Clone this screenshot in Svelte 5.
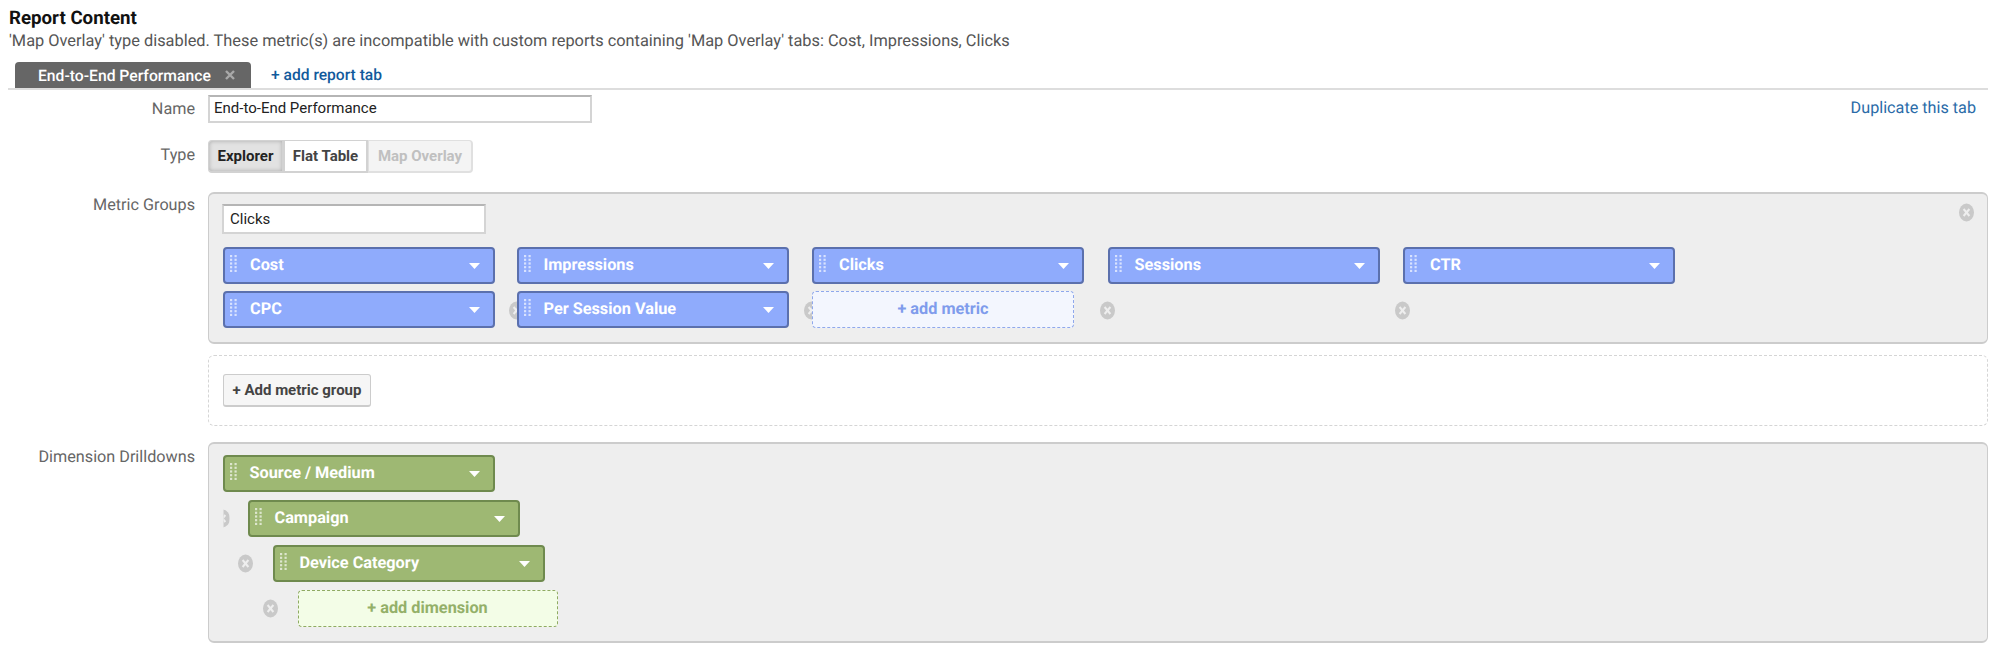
<script>
  const metricsTop = ['Cost', 'Impressions', 'Clicks', 'Sessions', 'CTR'];
  const handleDots = [];
  for (let r = 0; r < 5; r++) {
    for (let c = 0; c < 2; c++) handleDots.push({ x: 1 + c * 4.5, y: 1 + r * 3.7 });
  }
</script>

{#snippet closeIcon(cls)}
  <svg class="remove {cls}" width="15" height="19" viewBox="0 0 15 19">
    <ellipse cx="7.5" cy="9.5" rx="7.5" ry="9" fill="#c9c9c9" />
    <path d="M4.6 6 L10.4 13 M10.4 6 L4.6 13" stroke="#eee" stroke-width="2" />
  </svg>
{/snippet}

{#snippet chip(label)}
  <div class="chip-body">
    <svg class="handle" width="8" height="18" viewBox="0 0 8 18">
      {#each handleDots as d}
        <rect x={d.x - 1} y={d.y - 1} width="2.2" height="2.2" fill="#fff" opacity="0.65" />
      {/each}
    </svg>
    <span class="chip-label">{label}</span>
    <svg class="arrow" width="11" height="6" viewBox="0 0 11 6"><path d="M0 0 H11 L5.5 6 Z" fill="#fff" /></svg>
  </div>
{/snippet}

<div class="page">
  <h1>Report Content</h1>
  <p class="note">'Map Overlay' type disabled. These metric(s) are incompatible with custom reports containing 'Map Overlay' tabs: Cost, Impressions, Clicks</p>

  <div class="tabs">
    <div class="tab">
      <span>End-to-End Performance</span>
      <svg width="10" height="10" viewBox="0 0 10 10"><path d="M1 1 L9 9 M9 1 L1 9" stroke="#a9a9a9" stroke-width="2.4" /></svg>
    </div>
    <a class="add-tab" href="#tab">+ add report tab</a>
  </div>

  <div class="row name-row">
    <div class="label">Name</div>
    <div class="name-field">
      <input class="text-input name-input" value="End-to-End Performance" />
      <a class="dup" href="#dup">Duplicate this tab</a>
    </div>
  </div>

  <div class="row type-row">
    <div class="label">Type</div>
    <div class="types">
      <button class="type active">Explorer</button>
      <button class="type">Flat Table</button>
      <button class="type disabled">Map Overlay</button>
    </div>
  </div>

  <div class="row metric-row">
    <div class="label">Metric Groups</div>
    <div class="panel metrics">
      {@render closeIcon('panel-close')}
      <input class="text-input group-input" value="Clicks" />
      <div class="metric-grid">
        {#each metricsTop as m}
          <div class="cell"><div class="chip blue">{@render chip(m)}</div></div>
        {/each}
        <div class="cell"><div class="chip blue">{@render chip('CPC')}</div></div>
        <div class="cell">{@render closeIcon('cell-close')}<div class="chip blue">{@render chip('Per Session Value')}</div></div>
        <div class="cell">{@render closeIcon('cell-close')}<div class="add add-metric">+ add metric</div></div>
        <div class="cell">{@render closeIcon('cell-close')}</div>
        <div class="cell">{@render closeIcon('cell-close')}</div>
      </div>
    </div>
  </div>

  <div class="row add-group-row">
    <div></div>
    <div class="dashed"><button class="add-group">+ Add metric group</button></div>
  </div>

  <div class="row dim-row">
    <div class="label">Dimension Drilldowns</div>
    <div class="panel dims">
      <div class="dim-item"><div class="chip green">{@render chip('Source / Medium')}</div></div>
      <div class="dim-item step1">{@render closeIcon('dim-close sliver')}<div class="chip green">{@render chip('Campaign')}</div></div>
      <div class="dim-item step2">{@render closeIcon('dim-close')}<div class="chip green">{@render chip('Device Category')}</div></div>
      <div class="dim-item step3">{@render closeIcon('dim-close')}<div class="add add-dim">+ add dimension</div></div>
    </div>
  </div>
</div>

<style>
  :global(body) {
    margin: 0;
    background: #fff;
  }
  .page {
    width: 1999px;
    height: 654px;
    box-sizing: border-box;
    padding: 8px 11px 0 0;
    font-family: Roboto, "Liberation Sans", sans-serif;
    text-rendering: geometricPrecision;
    overflow: hidden;
  }
  h1 {
    margin: 0 0 0 9px;
    font-size: 18.7px;
    line-height: 20px;
    font-weight: 700;
    color: #111;
  }
  .note {
    margin: 3px 0 0 9px;
    font-size: 16.35px;
    line-height: 20px;
    color: #555;
  }
  .tabs {
    display: flex;
    align-items: center;
    margin: 11px 0 0 8px;
    padding-left: 7px;
    height: 26px;
    border-bottom: 2px solid #ddd;
  }
  .tab {
    display: flex;
    align-items: center;
    justify-content: space-between;
    box-sizing: border-box;
    width: 236px;
    height: 26px;
    padding: 0 16px 0 23px;
    background: #666;
    border-radius: 4px 4px 0 0;
    color: #fff;
    font-size: 15.7px;
    font-weight: 500;
  }
  .add-tab {
    margin-left: 20px;
    color: #125a9c;
    font-size: 15.6px;
    font-weight: 500;
    text-decoration: none;
  }
  .row {
    display: grid;
    grid-template-columns: 195px 1fr;
    column-gap: 13px;
  }
  .label {
    text-align: right;
    font-size: 16.2px;
    color: #666;
  }
  .name-row {
    margin-top: 4px;
  }
  .name-row .label {
    line-height: 28px;
    padding-top: 1px;
  }
  .name-field {
    display: flex;
    align-items: center;
    justify-content: space-between;
    padding-right: 12px;
  }
  .text-input {
    box-sizing: border-box;
    padding: 0 6px;
    font: 400 15px Roboto, "Liberation Sans", sans-serif;
    color: #222;
    background: #fff;
    border: 2px solid #d4d4d4;
    border-top-color: #b5b5b5;
    outline: none;
  }
  .name-input {
    width: 384px;
    height: 28px;
    padding: 0 4px 1px;
  }
  .dup {
    margin-top: -3px;
    color: #2a6ba8;
    font-size: 16.2px;
    text-decoration: none;
  }
  .type-row {
    margin-top: 17px;
  }
  .type-row .label {
    line-height: 30px;
  }
  .types {
    display: flex;
    height: 33px;
  }
  .type {
    box-sizing: border-box;
    height: 33px;
    padding: 0;
    font: 700 15px Roboto, "Liberation Sans", sans-serif;
    color: #444;
    background: #fff;
    border: 1px solid #d2d2d2;
    border-width: 1px 2px 2px 1px;
  }
  .type.active {
    width: 76px;
    color: #222;
    background: #e2e2e2;
    border-radius: 4px 0 0 4px;
    box-shadow: inset 0 0 4px #aaa;
  }
  .type:nth-child(2) {
    width: 84px;
  }
  .type.disabled {
    width: 105px;
    color: #c0c0c0;
    background: #f4f4f4;
    border-color: #e0e0e0;
    border-radius: 0 4px 4px 0;
  }
  .metric-row {
    margin-top: 19px;
  }
  .metric-row .label,
  .dim-row .label {
    padding-top: 3px;
    line-height: 20px;
  }
  .panel {
    position: relative;
    box-sizing: border-box;
    background: #eee;
    border: 1px solid #ccc;
    border-top-width: 2px;
    border-bottom-width: 2px;
    border-radius: 6px;
  }
  .metrics {
    height: 152px;
    padding: 10px 13px 0;
  }
  .group-input {
    display: block;
    width: 264px;
    height: 30px;
  }
  .metric-grid {
    display: grid;
    grid-template-columns: repeat(5, 272px);
    grid-auto-rows: 37px;
    column-gap: 23.5px;
    row-gap: 7px;
    margin-top: 13px;
    margin-left: 1px;
  }
  .cell {
    position: relative;
  }
  .cell:not(:nth-child(5n + 1)) {
    left: -2px;
  }
  .chip {
    position: relative;
    box-sizing: border-box;
    width: 272px;
    height: 37px;
    border-radius: 4px;
    border: 2px solid;
    color: #fff;
  }
  .chip.blue {
    background: #8fabfc;
    border-color: #5b70ad;
  }
  .chip.green {
    background: #9eb873;
    border-color: #6f8a4e;
  }
  .chip-body {
    display: flex;
    align-items: center;
    height: 100%;
    padding: 0 13px 0 5px;
  }
  .handle {
    flex: none;
    margin-top: -3px;
  }
  .chip-label {
    flex: 1;
    margin-left: 12px;
    margin-top: -3px;
    font-size: 16.3px;
    font-weight: 700;
  }
  .arrow {
    flex: none;
  }
  .remove {
    position: absolute;
  }
  :global(.panel-close) {
    top: 9px;
    right: 13px;
  }
  :global(.cell-close) {
    left: -8px;
    top: 10px;
  }
  :global(.dim-close) {
    left: -35px;
    top: 9px;
  }
  :global(.sliver) {
    left: -33px;
    clip-path: inset(0 0 0 9px);
  }
  .add {
    position: relative;
    display: flex;
    align-items: center;
    justify-content: center;
    box-sizing: border-box;
    height: 37px;
    border-radius: 4px;
    border: 1px dashed;
    padding-bottom: 2px;
    font-size: 16.3px;
    font-weight: 700;
  }
  .add-metric {
    width: 262px;
    background: #f3f6fe;
    border-color: #8fa8ec;
    color: #7f9cec;
  }
  .add-dim {
    width: 260px;
    background: #f3fde7;
    border-color: #8faa62;
    color: #94b069;
  }
  .add-group-row {
    margin-top: 11px;
  }
  .dashed {
    box-sizing: border-box;
    height: 71px;
    padding: 18px 14px;
    border: 1px dashed #d5d5d5;
    border-radius: 6px;
  }
  .add-group {
    display: block;
    box-sizing: border-box;
    width: 148px;
    height: 33px;
    padding: 0;
    font: 700 15px Roboto, "Liberation Sans", sans-serif;
    color: #444;
    background: #f6f6f6;
    border: 1px solid #ccc;
    border-bottom-width: 2px;
    border-radius: 3px;
  }
  .dim-row {
    margin-top: 16px;
  }
  .dim-row .label {
    padding-top: 5px;
  }
  .dims {
    display: flex;
    flex-direction: column;
    gap: 8px;
    height: 201px;
    padding: 11px 13px 0 13.5px;
  }
  .dim-item {
    position: relative;
    width: max-content;
  }
  .step1 {
    margin-left: 25px;
  }
  .step2 {
    margin-left: 50px;
  }
  .step3 {
    margin-left: 75px;
  }
</style>
